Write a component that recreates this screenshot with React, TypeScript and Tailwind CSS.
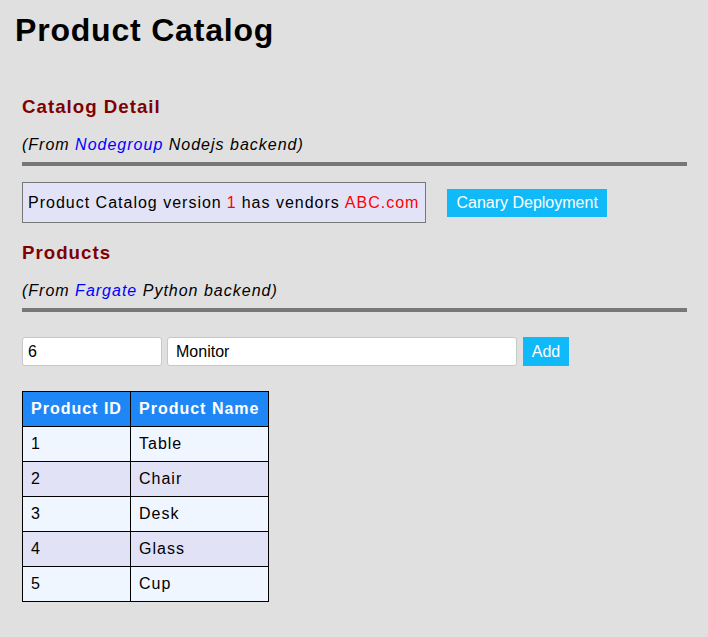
import { FC } from "react";

type Product = {
    id: number
    name: string
}

const products: Product[] = [
    { id: 1, name: 'Table' },
    { id: 2, name: 'Chair' },
    { id: 3, name: 'Desk' },
    { id: 4, name: 'Glass' },
    { id: 5, name: 'Cup' },
]

const SectionHeader: FC<{ title: string, source: string, rest: string }> = ({ title, source, rest }) => (
    <>
        <h3 className="text-[18.72px] leading-[22px] font-bold text-[#800000]">{title}</h3>
        <p className="mt-[18px] italic text-[16px] leading-[18px]">
            (From <span className="text-[#0000ff]">{source}</span> {rest})
        </p>
        <hr className="mt-[8.5px] h-[4px] border-0 bg-[#777777]" />
    </>
)

const App: FC = () => {
    return (
        <div className="min-h-screen bg-[#e0e0e0] text-black font-['Liberation_Sans',Arial,sans-serif] tracking-[1px] pb-8">
            <h1 className="pt-[12px] pl-[15px] text-[32px] leading-[37px] font-bold tracking-[0.8px]">Product Catalog</h1>
            <div className="pl-[22px] pr-[21px] mt-[46.5px]">
                <SectionHeader title="Catalog Detail" source="Nodegroup" rest="Nodejs backend" />
                <div className="mt-[16px] flex items-center gap-[21px]">
                    <div className="h-[41px] flex items-center pl-[5px] pr-[6px] border border-[#777777] bg-[#e3e3f8] text-[16px]">
                        Product Catalog version <span className="text-[#ff0000] mx-[5px]">1</span> has vendors <span className="text-[#ff0000] ml-[5px]">ABC.com</span>
                    </div>
                    <button className="h-[28px] px-[9px] bg-[#10b9f8] text-white text-[16px] tracking-normal">Canary Deployment</button>
                </div>
                <div className="mt-[18.5px]">
                    <SectionHeader title="Products" source="Fargate" rest="Python backend" />
                </div>
                <div className="mt-[25px] flex items-center">
                    <input defaultValue="6" className="w-[140px] h-[29px] px-[5px] bg-white border border-[#c8c8c8] rounded-[3px] text-[16px] tracking-normal outline-none" />
                    <input defaultValue="Monitor" className="ml-[5px] w-[350px] h-[29px] px-[8px] bg-white border border-[#c8c8c8] rounded-[3px] text-[16px] tracking-normal outline-none" />
                    <button className="ml-[6px] h-[29px] w-[46px] bg-[#10b9f8] text-white text-[16px] tracking-normal">Add</button>
                </div>
                <table className="mt-[25px] border-collapse text-[16px]">
                    <thead>
                        <tr className="bg-[#1f87f5] text-white font-bold">
                            <th className="w-[108px] h-[35px] border border-black text-left pl-[8px] font-bold">Product ID</th>
                            <th className="w-[138px] h-[35px] border border-black text-left pl-[8px] font-bold">Product Name</th>
                        </tr>
                    </thead>
                    <tbody>
                        {products.map((p, i) => (
                            <tr key={p.id} className={i % 2 === 0 ? 'bg-[#eff6ff]' : 'bg-[#e2e2f7]'}>
                                <td className="h-[35px] border border-black pl-[8px]">{p.id}</td>
                                <td className="h-[35px] border border-black pl-[8px]">{p.name}</td>
                            </tr>
                        ))}
                    </tbody>
                </table>
            </div>
        </div>
    );
}

export default App;
